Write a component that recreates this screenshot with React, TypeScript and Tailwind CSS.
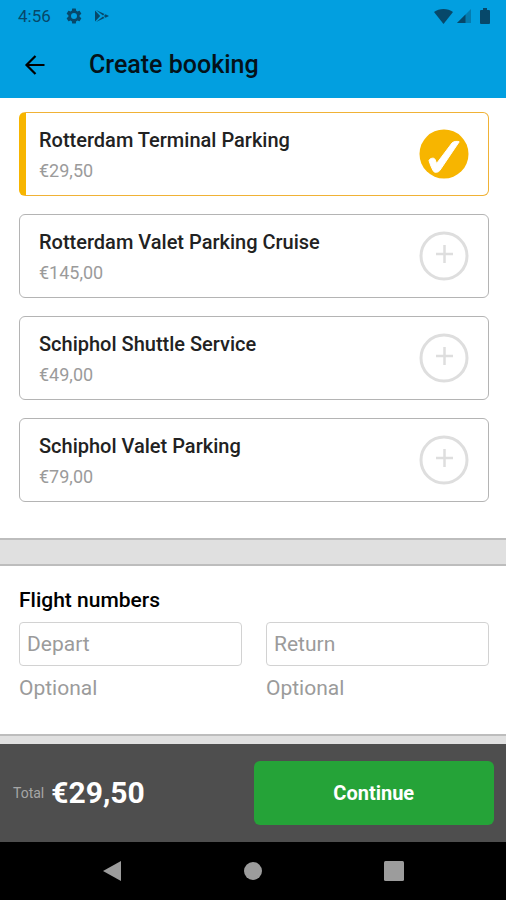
import { useState } from 'react'
import clsx from 'clsx'

interface ParkingOption {
  id: string
  name: string
  price: string
}

const options: ParkingOption[] = [
  { id: 'rtm-terminal', name: 'Rotterdam Terminal Parking', price: '€29,50' },
  { id: 'rtm-valet-cruise', name: 'Rotterdam Valet Parking Cruise', price: '€145,00' },
  { id: 'ams-shuttle', name: 'Schiphol Shuttle Service', price: '€49,00' },
  { id: 'ams-valet', name: 'Schiphol Valet Parking', price: '€79,00' },
]

const flightFields = [
  { id: 'depart', label: 'Depart' },
  { id: 'return', label: 'Return' },
]

function StatusBar() {
  return (
    <div className="flex h-8 items-center justify-between pl-[18px] pr-4 text-[#07486a]">
      <div className="flex items-center">
        <span className="text-[17px] leading-5">4:56</span>
        <svg className="ml-[14px] size-[18px]" viewBox="0 0 24 24" fill="currentColor">
          <path d="M19.43 12.98c.04-.32.07-.64.07-.98s-.03-.66-.07-.98l2.11-1.65c.19-.15.24-.42.12-.64l-2-3.46c-.12-.22-.39-.3-.61-.22l-2.49 1c-.52-.4-1.08-.73-1.69-.98l-.38-2.65A.49.49 0 0 0 14 2h-4c-.25 0-.46.18-.49.42l-.38 2.65c-.61.25-1.17.59-1.69.98l-2.49-1c-.23-.09-.49 0-.61.22l-2 3.46c-.13.22-.07.49.12.64l2.11 1.65c-.04.32-.07.65-.07.98s.03.66.07.98l-2.11 1.65c-.19.15-.24.42-.12.64l2 3.46c.12.22.39.3.61.22l2.49-1c.52.4 1.08.73 1.69.98l.38 2.65c.03.24.24.42.49.42h4c.25 0 .46-.18.49-.42l.38-2.65c.61-.25 1.17-.59 1.69-.98l2.49 1c.23.09.49 0 .61-.22l2-3.46c.12-.22.07-.49-.12-.64l-2.11-1.65zM12 16a4 4 0 1 1 0-8 4 4 0 0 1 0 8z" />
        </svg>
        <svg className="ml-3 h-3 w-[14px]" viewBox="0 0 14 12" fill="currentColor">
          <path d="M0 .5 5.200 6 0 11.500z" />
          <path d="M1 0 9.500 4 8 5.500zM1 12 9.500 8 8 6.500z" />
          <path d="M10.500 4.300 14 6l-3.500 1.700L9 6z" />
        </svg>
      </div>
      <div className="flex items-center">
        <svg className="h-[15px] w-[19px]" viewBox="0 0 19 15" fill="currentColor">
          <path d="M0 3C5-1 14-1 19 3L9.500 15z" />
        </svg>
        <svg className="ml-1 size-[14px]" viewBox="0 0 14 14" fill="currentColor">
          <path d="M0 14 14 0v14z" opacity=".4" />
          <path d="M0 14 8.500 5.500V14z" />
        </svg>
        <svg className="ml-[9px] h-4 w-[10px]" viewBox="0 0 10 16" fill="currentColor">
          <path d="M3 0h4v2h2a1 1 0 0 1 1 1v12a1 1 0 0 1-1 1H1a1 1 0 0 1-1-1V3a1 1 0 0 1 1-1h2z" />
        </svg>
      </div>
    </div>
  )
}

function OptionMark({ selected }: { selected: boolean }) {
  if (selected) {
    return (
      <svg className="size-[50px] shrink-0" viewBox="0 0 50 50">
        <circle cx="25" cy="25" r="24.500" fill="#f7b500" />
        <path
          d="M10 31.500c.8-2.400 5-3.200 6-1.200l1.600 4.200L33 14c1.600-1.800 5.500-2 7.200-1.200L20.800 41.500c-1.400 2-5.200 2.500-6.300.8-1.800-3-3.500-7.300-4.500-10.800z"
          fill="#fff"
          stroke="#fff"
          strokeWidth="1"
          strokeLinejoin="round"
        />
      </svg>
    )
  }
  return (
    <svg className="size-[50px] shrink-0" viewBox="0 0 50 50" fill="none" stroke="#dedede">
      <circle cx="25" cy="25" r="23" strokeWidth="3" />
      <path d="M17 23h17M25.500 14v18" strokeWidth="2.500" />
    </svg>
  )
}

interface OptionCardProps {
  option: ParkingOption
  selected: boolean
  onSelect: () => void
}

function OptionCard({ option, selected, onSelect }: OptionCardProps) {
  return (
    <button
      type="button"
      aria-pressed={selected}
      onClick={onSelect}
      className={clsx(
        'flex h-[84px] w-full items-center justify-between rounded-md border bg-white pr-[19px] text-left',
        selected ? 'border-l-[7px] border-[#f0b236] border-l-[#f7b500] pl-[13px]' : 'border-[#b4b4b4] pl-[19px]',
      )}
    >
      <span className="flex flex-col gap-[3px] pt-[3px]">
        <span className="text-xl leading-7 font-medium text-[#222]">{option.name}</span>
        <span className="text-lg leading-7 text-[#9b9b9b]">{option.price}</span>
      </span>
      <OptionMark selected={selected} />
    </button>
  )
}

export default function App() {
  const [selectedId, setSelectedId] = useState('rtm-terminal')
  const selected = options.find((o) => o.id === selectedId) ?? options[0]

  return (
    <div className="flex min-h-screen flex-col bg-[#e0e0e0] font-[Roboto,sans-serif]">
      <header className="bg-[#029fe0]">
        <StatusBar />
        <div className="flex h-[66px] items-center px-6">
          <button type="button" aria-label="Back" className="text-black">
            <svg className="size-[22px]" viewBox="0 0 22 22" fill="none" stroke="currentColor" strokeWidth="2.200">
              <path d="M20.500 11H3M11.500 2 2.500 11l9 9" />
            </svg>
          </button>
          <h1 className="ml-[43px] text-[25px] leading-8 font-medium text-[#04121a]">Create booking</h1>
        </div>
      </header>

      <main className="flex-1">
        <section className="flex flex-col gap-[18px] border-b-2 border-[#bdbdbd] bg-white pt-[14px] pr-[17px] pb-9 pl-[19px]">
          {options.map((option) => (
            <OptionCard
              key={option.id}
              option={option}
              selected={option.id === selectedId}
              onSelect={() => setSelectedId(option.id)}
            />
          ))}
        </section>

        <section className="mt-6 border-y-2 border-[#bdbdbd] bg-white pt-5 pr-[17px] pb-8 pl-[19px]">
          <h2 className="text-[21px] leading-7 font-medium text-black">Flight numbers</h2>
          <div className="mt-2 grid grid-cols-2 gap-6">
            {flightFields.map((field) => (
              <div key={field.id}>
                <input
                  id={field.id}
                  type="text"
                  aria-label={field.label}
                  aria-describedby={`${field.id}-hint`}
                  placeholder={field.label}
                  className="h-11 w-full rounded-sm border border-[#d2d2d2] bg-white px-[7px] text-[21px] text-[#222] placeholder:text-[#9b9b9b]"
                />
                <p id={`${field.id}-hint`} className="mt-2 text-[21px] leading-7 text-[#9b9b9b]">
                  Optional
                </p>
              </div>
            ))}
          </div>
        </section>
      </main>

      <footer className="sticky bottom-0">
        <div className="flex h-[98px] items-center justify-between bg-[#4e4e4e] pr-3 pl-[13px]">
          <p className="flex items-center gap-[7px]">
            <span className="text-sm text-[#a6a6a6]">Total</span>
            <span className="text-[30px] leading-9 font-bold text-white">{selected.price}</span>
          </p>
          <button
            type="button"
            className="h-16 w-1/2 rounded-md bg-[#25a338] text-xl font-bold text-white"
          >
            Continue
          </button>
        </div>
        <nav className="flex h-[58px] items-center justify-around bg-black px-[42px] text-[#9c9c9c]">
          <button type="button" aria-label="Back">
            <svg className="size-5" viewBox="0 0 20 20" fill="currentColor">
              <path d="M1 10 19 0v20z" />
            </svg>
          </button>
          <button type="button" aria-label="Home">
            <svg className="size-5" viewBox="0 0 20 20" fill="currentColor">
              <circle cx="10" cy="10" r="9" />
            </svg>
          </button>
          <button type="button" aria-label="Recent apps">
            <svg className="size-5" viewBox="0 0 20 20" fill="currentColor">
              <rect width="20" height="20" rx="1.500" />
            </svg>
          </button>
        </nav>
      </footer>
    </div>
  )
}
